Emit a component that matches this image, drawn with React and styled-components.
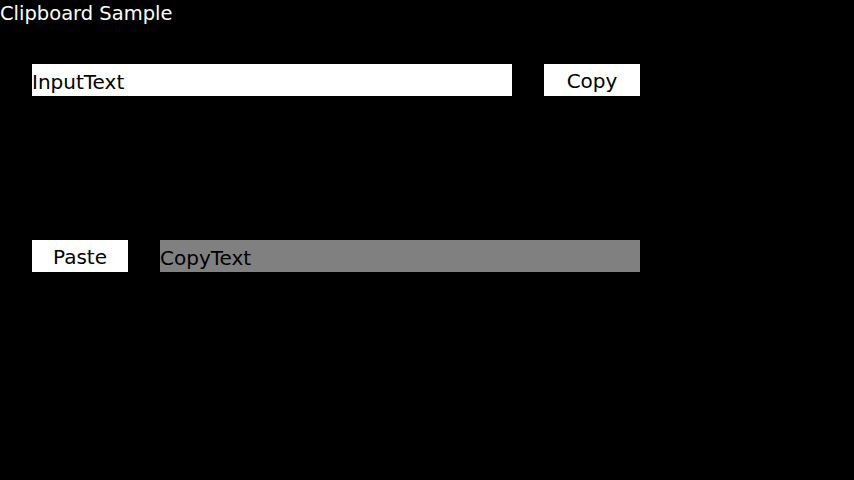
import React, { useState } from "react";
import styled, { createGlobalStyle } from "styled-components";

const GlobalStyle = createGlobalStyle`
  html, body {
    margin: 0;
    padding: 0;
    background: #000;
  }
  body {
    font-family: "DejaVu Sans", "Noto Sans CJK JP", sans-serif;
  }
`;

const Screen = styled.div`
  width: 854px;
  height: 480px;
  background: #000;
  display: flex;
  flex-direction: column;
`;

const Title = styled.div`
  color: #fff;
  font-size: 19.5px;
  line-height: 28px;
  height: 28px;
`;

const Row = styled.div`
  display: flex;
  gap: 32px;
  padding-left: 32px;
  margin-top: ${(props) => props.top}px;
`;

const Field = styled.div`
  box-sizing: border-box;
  width: 480px;
  height: 32px;
  padding-top: 2px;
  background: ${(props) => (props.muted ? "#808080" : "#fff")};
  color: #000;
  font-size: 20px;
  line-height: 32px;
  white-space: nowrap;
  overflow: hidden;
`;

const Button = styled.button`
  box-sizing: border-box;
  width: 96px;
  height: 32px;
  border: none;
  padding: 2px 0 0;
  background: #fff;
  color: #000;
  font-family: inherit;
  font-size: 20px;
  line-height: 30px;
  cursor: pointer;
`;

const App = () => {
  const [input] = useState("InputText");
  const [copied, setCopied] = useState("CopyText");

  return (
    <Screen>
      <GlobalStyle />
      <Title>Clipboard Sample</Title>
      <Row top={36}>
        <Field>{input}</Field>
        <Button>Copy</Button>
      </Row>
      <Row top={144}>
        <Button onClick={() => setCopied(input)}>Paste</Button>
        <Field muted>{copied}</Field>
      </Row>
    </Screen>
  );
};

export default App;
